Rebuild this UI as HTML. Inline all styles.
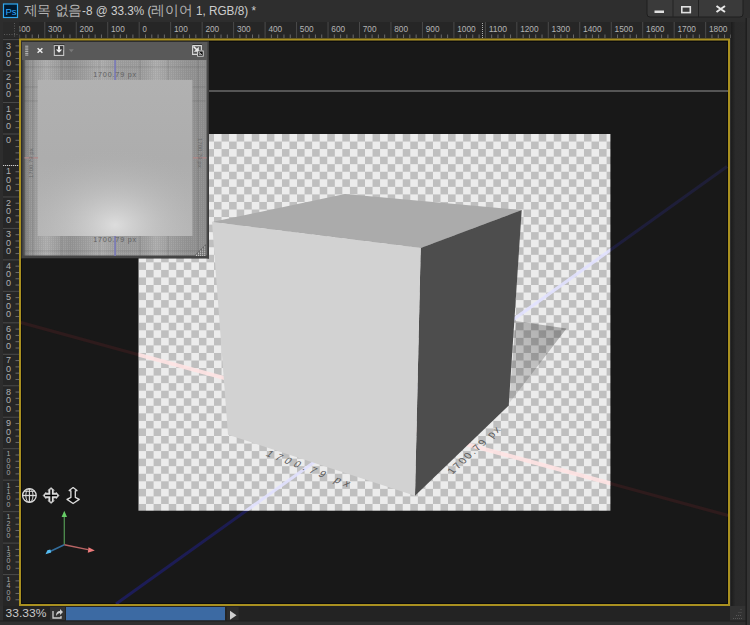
<!DOCTYPE html><html><head><meta charset="utf-8"><style>
html,body{margin:0;padding:0;background:#2d2d2d;width:750px;height:625px;overflow:hidden}
svg{display:block}
text{font-family:"Liberation Sans",sans-serif}
</style></head><body>
<svg width="750" height="625" viewBox="0 0 750 625">
<defs>
<pattern id="chk" x="138.5" y="134" width="15.1" height="15.1" patternUnits="userSpaceOnUse">
<rect width="15.1" height="15.1" fill="#ececec"/>
<rect x="7.55" width="7.55" height="7.55" fill="#bfbfbf"/>
<rect y="7.55" width="7.55" height="7.55" fill="#bfbfbf"/>
</pattern>
<clipPath id="canvasclip"><rect x="138.5" y="134" width="471.9" height="376.7"/></clipPath>
<clipPath id="docclip"><path clip-rule="evenodd" d="M21 41 H728 V604 H21 Z M138.5 134 H610.4 V510.7 H138.5 Z"/></clipPath>
<linearGradient id="shadowg" x1="0.8" y1="0" x2="0.2" y2="1">
<stop offset="0" stop-color="#000" stop-opacity="0.27"/>
<stop offset="1" stop-color="#000" stop-opacity="0.1"/>
</linearGradient>
<pattern id="grid" x="0" y="0" width="2" height="2" patternUnits="userSpaceOnUse">
<rect width="2" height="2" fill="#aaaaaa"/><rect width="0.8" height="2" fill="#9a9a9a"/><rect width="2" height="0.8" fill="#9e9e9e"/>
</pattern>
<linearGradient id="bandg" x1="0" y1="0" x2="1" y2="0">
<stop offset="0" stop-color="#000" stop-opacity="0.5"/>
<stop offset="0.12" stop-color="#fff" stop-opacity="0.4"/>
<stop offset="0.25" stop-color="#000" stop-opacity="0.3"/>
<stop offset="0.42" stop-color="#fff" stop-opacity="0.4"/>
<stop offset="0.6" stop-color="#000" stop-opacity="0.1"/>
<stop offset="0.72" stop-color="#fff" stop-opacity="0.4"/>
<stop offset="0.9" stop-color="#000" stop-opacity="0.3"/>
<stop offset="1" stop-color="#000" stop-opacity="0.4"/>
</linearGradient>
<linearGradient id="planeg" x1="0" y1="0" x2="0" y2="1">
<stop offset="0" stop-color="#b1b1b1"/>
<stop offset="0.5" stop-color="#adadad"/>
<stop offset="1" stop-color="#b4b4b4"/>
</linearGradient>
<radialGradient id="planeglow" cx="0.5" cy="0.93" r="0.62" fx="0.5" fy="0.93" gradientTransform="translate(0.5,0.93) scale(1.1,0.8) translate(-0.5,-0.93)">
<stop offset="0" stop-color="#e4e4e4" stop-opacity="0.85"/>
<stop offset="0.45" stop-color="#cfcfcf" stop-opacity="0.4"/>
<stop offset="1" stop-color="#b0b0b0" stop-opacity="0"/>
</radialGradient>
<linearGradient id="rstrip" x1="0" y1="0" x2="1" y2="0">
<stop offset="0" stop-color="#1c1c1c"/><stop offset="0.3" stop-color="#2a2a2a"/><stop offset="1" stop-color="#2b2b2b"/>
</linearGradient>
<filter id="soft" x="-5%" y="-5%" width="110%" height="110%"><feGaussianBlur stdDeviation="0.5"/></filter>
<linearGradient id="pedge" x1="0" y1="0" x2="1" y2="0"><stop offset="0" stop-color="#8a8a8a"/><stop offset="1" stop-color="#4a4a4a"/></linearGradient>
<linearGradient id="blueg" gradientUnits="userSpaceOnUse" x1="116" y1="604" x2="727" y2="166.5"><stop offset="0" stop-color="#1c1c58"/><stop offset="1" stop-color="#1e1e36"/></linearGradient>
<pattern id="dots" x="0" y="0" width="2" height="2" patternUnits="userSpaceOnUse"><rect width="2" height="2" fill="#6a6a6a"/><rect width="1" height="1" fill="#c8c8c8"/></pattern>
<linearGradient id="ledge" x1="0" y1="0" x2="1" y2="0"><stop offset="0" stop-color="#3a3a3a"/><stop offset="1" stop-color="#6a6a6a"/></linearGradient>
</defs>

<rect x="0" y="0" width="750" height="625" fill="#2d2d2d"/>
<rect x="0" y="0" width="750" height="20" fill="#2e2e2e"/>
<rect x="3.5" y="4" width="14" height="13.5" fill="#001a30" stroke="#2fa8f0" stroke-width="1.2"/>
<text x="5.4" y="14.5" font-size="9.5" fill="#31a8ff">Ps</text>
<text x="23.5" y="15" font-size="12" fill="#cdcdcd" textLength="232.5" lengthAdjust="spacingAndGlyphs"><tspan font-size="13.6" fill="#b4b4b4">제목 없음</tspan>-8 @ 33.3% (<tspan font-size="13.6" fill="#b4b4b4">레이어</tspan> 1, RGB/8) *</text>
<rect x="647" y="-3" width="96" height="20" rx="3" fill="#3a3a3a" stroke="#1e1e1e" stroke-width="1"/>
<line x1="673" y1="0" x2="673" y2="17" stroke="#222" stroke-width="1"/>
<line x1="698.5" y1="0" x2="698.5" y2="17" stroke="#222" stroke-width="1"/>
<rect x="654.5" y="10.5" width="9.5" height="2.5" fill="#e0e0e0"/>
<rect x="681.8" y="6.8" width="8.5" height="5.8" fill="none" stroke="#e0e0e0" stroke-width="1.6"/>
<path d="M716.5 6 L725 12 M725 6 L716.5 12" stroke="#e8e8e8" stroke-width="2"/>
<rect x="3" y="22" width="728" height="16.5" fill="#262626"/>
<rect x="3" y="22" width="16" height="16.5" fill="#2a2a2a"/>
<path d="M14.5 23 V37 M4 34.5 H18" stroke="#5a5a5a" stroke-width="1" stroke-dasharray="1,1.5"/>
<g clip-path="url(#rtop)"><line x1="-5.56" y1="34.5" x2="-5.56" y2="38" stroke="#6a6a6a" stroke-width="1"/><line x1="0.73" y1="34.5" x2="0.73" y2="38" stroke="#6a6a6a" stroke-width="1"/><line x1="7.03" y1="34.5" x2="7.03" y2="38" stroke="#6a6a6a" stroke-width="1"/><line x1="13.32" y1="22" x2="13.32" y2="38" stroke="#4a4a4a" stroke-width="1"/><line x1="19.61" y1="34.5" x2="19.61" y2="38" stroke="#6a6a6a" stroke-width="1"/><line x1="25.91" y1="34.5" x2="25.91" y2="38" stroke="#6a6a6a" stroke-width="1"/><line x1="32.20" y1="34.5" x2="32.20" y2="38" stroke="#6a6a6a" stroke-width="1"/><line x1="38.50" y1="34.5" x2="38.50" y2="38" stroke="#6a6a6a" stroke-width="1"/><line x1="44.79" y1="22" x2="44.79" y2="38" stroke="#4a4a4a" stroke-width="1"/><line x1="51.08" y1="34.5" x2="51.08" y2="38" stroke="#6a6a6a" stroke-width="1"/><line x1="57.38" y1="34.5" x2="57.38" y2="38" stroke="#6a6a6a" stroke-width="1"/><line x1="63.67" y1="34.5" x2="63.67" y2="38" stroke="#6a6a6a" stroke-width="1"/><line x1="69.97" y1="34.5" x2="69.97" y2="38" stroke="#6a6a6a" stroke-width="1"/><line x1="76.26" y1="22" x2="76.26" y2="38" stroke="#4a4a4a" stroke-width="1"/><line x1="82.55" y1="34.5" x2="82.55" y2="38" stroke="#6a6a6a" stroke-width="1"/><line x1="88.85" y1="34.5" x2="88.85" y2="38" stroke="#6a6a6a" stroke-width="1"/><line x1="95.14" y1="34.5" x2="95.14" y2="38" stroke="#6a6a6a" stroke-width="1"/><line x1="101.44" y1="34.5" x2="101.44" y2="38" stroke="#6a6a6a" stroke-width="1"/><line x1="107.73" y1="22" x2="107.73" y2="38" stroke="#4a4a4a" stroke-width="1"/><line x1="114.02" y1="34.5" x2="114.02" y2="38" stroke="#6a6a6a" stroke-width="1"/><line x1="120.32" y1="34.5" x2="120.32" y2="38" stroke="#6a6a6a" stroke-width="1"/><line x1="126.61" y1="34.5" x2="126.61" y2="38" stroke="#6a6a6a" stroke-width="1"/><line x1="132.91" y1="34.5" x2="132.91" y2="38" stroke="#6a6a6a" stroke-width="1"/><line x1="139.20" y1="22" x2="139.20" y2="38" stroke="#4a4a4a" stroke-width="1"/><line x1="145.49" y1="34.5" x2="145.49" y2="38" stroke="#6a6a6a" stroke-width="1"/><line x1="151.79" y1="34.5" x2="151.79" y2="38" stroke="#6a6a6a" stroke-width="1"/><line x1="158.08" y1="34.5" x2="158.08" y2="38" stroke="#6a6a6a" stroke-width="1"/><line x1="164.38" y1="34.5" x2="164.38" y2="38" stroke="#6a6a6a" stroke-width="1"/><line x1="170.67" y1="22" x2="170.67" y2="38" stroke="#4a4a4a" stroke-width="1"/><line x1="176.96" y1="34.5" x2="176.96" y2="38" stroke="#6a6a6a" stroke-width="1"/><line x1="183.26" y1="34.5" x2="183.26" y2="38" stroke="#6a6a6a" stroke-width="1"/><line x1="189.55" y1="34.5" x2="189.55" y2="38" stroke="#6a6a6a" stroke-width="1"/><line x1="195.85" y1="34.5" x2="195.85" y2="38" stroke="#6a6a6a" stroke-width="1"/><line x1="202.14" y1="22" x2="202.14" y2="38" stroke="#4a4a4a" stroke-width="1"/><line x1="208.43" y1="34.5" x2="208.43" y2="38" stroke="#6a6a6a" stroke-width="1"/><line x1="214.73" y1="34.5" x2="214.73" y2="38" stroke="#6a6a6a" stroke-width="1"/><line x1="221.02" y1="34.5" x2="221.02" y2="38" stroke="#6a6a6a" stroke-width="1"/><line x1="227.32" y1="34.5" x2="227.32" y2="38" stroke="#6a6a6a" stroke-width="1"/><line x1="233.61" y1="22" x2="233.61" y2="38" stroke="#4a4a4a" stroke-width="1"/><line x1="239.90" y1="34.5" x2="239.90" y2="38" stroke="#6a6a6a" stroke-width="1"/><line x1="246.20" y1="34.5" x2="246.20" y2="38" stroke="#6a6a6a" stroke-width="1"/><line x1="252.49" y1="34.5" x2="252.49" y2="38" stroke="#6a6a6a" stroke-width="1"/><line x1="258.79" y1="34.5" x2="258.79" y2="38" stroke="#6a6a6a" stroke-width="1"/><line x1="265.08" y1="22" x2="265.08" y2="38" stroke="#4a4a4a" stroke-width="1"/><line x1="271.37" y1="34.5" x2="271.37" y2="38" stroke="#6a6a6a" stroke-width="1"/><line x1="277.67" y1="34.5" x2="277.67" y2="38" stroke="#6a6a6a" stroke-width="1"/><line x1="283.96" y1="34.5" x2="283.96" y2="38" stroke="#6a6a6a" stroke-width="1"/><line x1="290.26" y1="34.5" x2="290.26" y2="38" stroke="#6a6a6a" stroke-width="1"/><line x1="296.55" y1="22" x2="296.55" y2="38" stroke="#4a4a4a" stroke-width="1"/><line x1="302.84" y1="34.5" x2="302.84" y2="38" stroke="#6a6a6a" stroke-width="1"/><line x1="309.14" y1="34.5" x2="309.14" y2="38" stroke="#6a6a6a" stroke-width="1"/><line x1="315.43" y1="34.5" x2="315.43" y2="38" stroke="#6a6a6a" stroke-width="1"/><line x1="321.73" y1="34.5" x2="321.73" y2="38" stroke="#6a6a6a" stroke-width="1"/><line x1="328.02" y1="22" x2="328.02" y2="38" stroke="#4a4a4a" stroke-width="1"/><line x1="334.31" y1="34.5" x2="334.31" y2="38" stroke="#6a6a6a" stroke-width="1"/><line x1="340.61" y1="34.5" x2="340.61" y2="38" stroke="#6a6a6a" stroke-width="1"/><line x1="346.90" y1="34.5" x2="346.90" y2="38" stroke="#6a6a6a" stroke-width="1"/><line x1="353.20" y1="34.5" x2="353.20" y2="38" stroke="#6a6a6a" stroke-width="1"/><line x1="359.49" y1="22" x2="359.49" y2="38" stroke="#4a4a4a" stroke-width="1"/><line x1="365.78" y1="34.5" x2="365.78" y2="38" stroke="#6a6a6a" stroke-width="1"/><line x1="372.08" y1="34.5" x2="372.08" y2="38" stroke="#6a6a6a" stroke-width="1"/><line x1="378.37" y1="34.5" x2="378.37" y2="38" stroke="#6a6a6a" stroke-width="1"/><line x1="384.67" y1="34.5" x2="384.67" y2="38" stroke="#6a6a6a" stroke-width="1"/><line x1="390.96" y1="22" x2="390.96" y2="38" stroke="#4a4a4a" stroke-width="1"/><line x1="397.25" y1="34.5" x2="397.25" y2="38" stroke="#6a6a6a" stroke-width="1"/><line x1="403.55" y1="34.5" x2="403.55" y2="38" stroke="#6a6a6a" stroke-width="1"/><line x1="409.84" y1="34.5" x2="409.84" y2="38" stroke="#6a6a6a" stroke-width="1"/><line x1="416.14" y1="34.5" x2="416.14" y2="38" stroke="#6a6a6a" stroke-width="1"/><line x1="422.43" y1="22" x2="422.43" y2="38" stroke="#4a4a4a" stroke-width="1"/><line x1="428.72" y1="34.5" x2="428.72" y2="38" stroke="#6a6a6a" stroke-width="1"/><line x1="435.02" y1="34.5" x2="435.02" y2="38" stroke="#6a6a6a" stroke-width="1"/><line x1="441.31" y1="34.5" x2="441.31" y2="38" stroke="#6a6a6a" stroke-width="1"/><line x1="447.61" y1="34.5" x2="447.61" y2="38" stroke="#6a6a6a" stroke-width="1"/><line x1="453.90" y1="22" x2="453.90" y2="38" stroke="#4a4a4a" stroke-width="1"/><line x1="460.19" y1="34.5" x2="460.19" y2="38" stroke="#6a6a6a" stroke-width="1"/><line x1="466.49" y1="34.5" x2="466.49" y2="38" stroke="#6a6a6a" stroke-width="1"/><line x1="472.78" y1="34.5" x2="472.78" y2="38" stroke="#6a6a6a" stroke-width="1"/><line x1="479.08" y1="34.5" x2="479.08" y2="38" stroke="#6a6a6a" stroke-width="1"/><line x1="485.37" y1="22" x2="485.37" y2="38" stroke="#4a4a4a" stroke-width="1"/><line x1="491.66" y1="34.5" x2="491.66" y2="38" stroke="#6a6a6a" stroke-width="1"/><line x1="497.96" y1="34.5" x2="497.96" y2="38" stroke="#6a6a6a" stroke-width="1"/><line x1="504.25" y1="34.5" x2="504.25" y2="38" stroke="#6a6a6a" stroke-width="1"/><line x1="510.55" y1="34.5" x2="510.55" y2="38" stroke="#6a6a6a" stroke-width="1"/><line x1="516.84" y1="22" x2="516.84" y2="38" stroke="#4a4a4a" stroke-width="1"/><line x1="523.13" y1="34.5" x2="523.13" y2="38" stroke="#6a6a6a" stroke-width="1"/><line x1="529.43" y1="34.5" x2="529.43" y2="38" stroke="#6a6a6a" stroke-width="1"/><line x1="535.72" y1="34.5" x2="535.72" y2="38" stroke="#6a6a6a" stroke-width="1"/><line x1="542.02" y1="34.5" x2="542.02" y2="38" stroke="#6a6a6a" stroke-width="1"/><line x1="548.31" y1="22" x2="548.31" y2="38" stroke="#4a4a4a" stroke-width="1"/><line x1="554.60" y1="34.5" x2="554.60" y2="38" stroke="#6a6a6a" stroke-width="1"/><line x1="560.90" y1="34.5" x2="560.90" y2="38" stroke="#6a6a6a" stroke-width="1"/><line x1="567.19" y1="34.5" x2="567.19" y2="38" stroke="#6a6a6a" stroke-width="1"/><line x1="573.49" y1="34.5" x2="573.49" y2="38" stroke="#6a6a6a" stroke-width="1"/><line x1="579.78" y1="22" x2="579.78" y2="38" stroke="#4a4a4a" stroke-width="1"/><line x1="586.07" y1="34.5" x2="586.07" y2="38" stroke="#6a6a6a" stroke-width="1"/><line x1="592.37" y1="34.5" x2="592.37" y2="38" stroke="#6a6a6a" stroke-width="1"/><line x1="598.66" y1="34.5" x2="598.66" y2="38" stroke="#6a6a6a" stroke-width="1"/><line x1="604.96" y1="34.5" x2="604.96" y2="38" stroke="#6a6a6a" stroke-width="1"/><line x1="611.25" y1="22" x2="611.25" y2="38" stroke="#4a4a4a" stroke-width="1"/><line x1="617.54" y1="34.5" x2="617.54" y2="38" stroke="#6a6a6a" stroke-width="1"/><line x1="623.84" y1="34.5" x2="623.84" y2="38" stroke="#6a6a6a" stroke-width="1"/><line x1="630.13" y1="34.5" x2="630.13" y2="38" stroke="#6a6a6a" stroke-width="1"/><line x1="636.43" y1="34.5" x2="636.43" y2="38" stroke="#6a6a6a" stroke-width="1"/><line x1="642.72" y1="22" x2="642.72" y2="38" stroke="#4a4a4a" stroke-width="1"/><line x1="649.01" y1="34.5" x2="649.01" y2="38" stroke="#6a6a6a" stroke-width="1"/><line x1="655.31" y1="34.5" x2="655.31" y2="38" stroke="#6a6a6a" stroke-width="1"/><line x1="661.60" y1="34.5" x2="661.60" y2="38" stroke="#6a6a6a" stroke-width="1"/><line x1="667.90" y1="34.5" x2="667.90" y2="38" stroke="#6a6a6a" stroke-width="1"/><line x1="674.19" y1="22" x2="674.19" y2="38" stroke="#4a4a4a" stroke-width="1"/><line x1="680.48" y1="34.5" x2="680.48" y2="38" stroke="#6a6a6a" stroke-width="1"/><line x1="686.78" y1="34.5" x2="686.78" y2="38" stroke="#6a6a6a" stroke-width="1"/><line x1="693.07" y1="34.5" x2="693.07" y2="38" stroke="#6a6a6a" stroke-width="1"/><line x1="699.37" y1="34.5" x2="699.37" y2="38" stroke="#6a6a6a" stroke-width="1"/><line x1="705.66" y1="22" x2="705.66" y2="38" stroke="#4a4a4a" stroke-width="1"/><line x1="711.95" y1="34.5" x2="711.95" y2="38" stroke="#6a6a6a" stroke-width="1"/><line x1="718.25" y1="34.5" x2="718.25" y2="38" stroke="#6a6a6a" stroke-width="1"/><line x1="724.54" y1="34.5" x2="724.54" y2="38" stroke="#6a6a6a" stroke-width="1"/><line x1="730.84" y1="34.5" x2="730.84" y2="38" stroke="#6a6a6a" stroke-width="1"/><text x="16.62" y="31.9" font-size="9.2" fill="#b4b4b4" textLength="13.76" lengthAdjust="spacingAndGlyphs">400</text><text x="48.09" y="31.9" font-size="9.2" fill="#b4b4b4" textLength="13.76" lengthAdjust="spacingAndGlyphs">300</text><text x="79.56" y="31.9" font-size="9.2" fill="#b4b4b4" textLength="13.76" lengthAdjust="spacingAndGlyphs">200</text><text x="111.03" y="31.9" font-size="9.2" fill="#b4b4b4" textLength="13.76" lengthAdjust="spacingAndGlyphs">100</text><text x="142.50" y="31.9" font-size="9.2" fill="#b4b4b4" textLength="4.32" lengthAdjust="spacingAndGlyphs">0</text><text x="173.97" y="31.9" font-size="9.2" fill="#b4b4b4" textLength="13.76" lengthAdjust="spacingAndGlyphs">100</text><text x="205.44" y="31.9" font-size="9.2" fill="#b4b4b4" textLength="13.76" lengthAdjust="spacingAndGlyphs">200</text><text x="236.91" y="31.9" font-size="9.2" fill="#b4b4b4" textLength="13.76" lengthAdjust="spacingAndGlyphs">300</text><text x="268.38" y="31.9" font-size="9.2" fill="#b4b4b4" textLength="13.76" lengthAdjust="spacingAndGlyphs">400</text><text x="299.85" y="31.9" font-size="9.2" fill="#b4b4b4" textLength="13.76" lengthAdjust="spacingAndGlyphs">500</text><text x="331.32" y="31.9" font-size="9.2" fill="#b4b4b4" textLength="13.76" lengthAdjust="spacingAndGlyphs">600</text><text x="362.79" y="31.9" font-size="9.2" fill="#b4b4b4" textLength="13.76" lengthAdjust="spacingAndGlyphs">700</text><text x="394.26" y="31.9" font-size="9.2" fill="#b4b4b4" textLength="13.76" lengthAdjust="spacingAndGlyphs">800</text><text x="425.73" y="31.9" font-size="9.2" fill="#b4b4b4" textLength="13.76" lengthAdjust="spacingAndGlyphs">900</text><text x="457.20" y="31.9" font-size="9.2" fill="#b4b4b4" textLength="18.48" lengthAdjust="spacingAndGlyphs">1000</text><text x="488.67" y="31.9" font-size="9.2" fill="#b4b4b4" textLength="18.48" lengthAdjust="spacingAndGlyphs">1100</text><text x="520.14" y="31.9" font-size="9.2" fill="#b4b4b4" textLength="18.48" lengthAdjust="spacingAndGlyphs">1200</text><text x="551.61" y="31.9" font-size="9.2" fill="#b4b4b4" textLength="18.48" lengthAdjust="spacingAndGlyphs">1300</text><text x="583.08" y="31.9" font-size="9.2" fill="#b4b4b4" textLength="18.48" lengthAdjust="spacingAndGlyphs">1400</text><text x="614.55" y="31.9" font-size="9.2" fill="#b4b4b4" textLength="18.48" lengthAdjust="spacingAndGlyphs">1500</text><text x="646.02" y="31.9" font-size="9.2" fill="#b4b4b4" textLength="18.48" lengthAdjust="spacingAndGlyphs">1600</text><text x="677.49" y="31.9" font-size="9.2" fill="#b4b4b4" textLength="18.48" lengthAdjust="spacingAndGlyphs">1700</text><text x="708.96" y="31.9" font-size="9.2" fill="#b4b4b4" textLength="18.48" lengthAdjust="spacingAndGlyphs">1800</text></g>
<clipPath id="rtop"><rect x="19.5" y="22" width="712" height="16.5"/></clipPath>
<line x1="482.5" y1="23" x2="482.5" y2="38" stroke="#bdbdbd" stroke-width="0.9" stroke-dasharray="1,1"/>
<rect x="3" y="38.5" width="16" height="568" fill="#262626"/>
<clipPath id="rleft"><rect x="3" y="38.5" width="16" height="566"/></clipPath>
<g clip-path="url(#rleft)"><line x1="3" y1="39.59" x2="19" y2="39.59" stroke="#4a4a4a" stroke-width="1"/><line x1="15.5" y1="45.88" x2="19" y2="45.88" stroke="#6a6a6a" stroke-width="1"/><line x1="15.5" y1="52.18" x2="19" y2="52.18" stroke="#6a6a6a" stroke-width="1"/><line x1="15.5" y1="58.47" x2="19" y2="58.47" stroke="#6a6a6a" stroke-width="1"/><line x1="15.5" y1="64.77" x2="19" y2="64.77" stroke="#6a6a6a" stroke-width="1"/><line x1="3" y1="71.06" x2="19" y2="71.06" stroke="#4a4a4a" stroke-width="1"/><line x1="15.5" y1="77.35" x2="19" y2="77.35" stroke="#6a6a6a" stroke-width="1"/><line x1="15.5" y1="83.65" x2="19" y2="83.65" stroke="#6a6a6a" stroke-width="1"/><line x1="15.5" y1="89.94" x2="19" y2="89.94" stroke="#6a6a6a" stroke-width="1"/><line x1="15.5" y1="96.24" x2="19" y2="96.24" stroke="#6a6a6a" stroke-width="1"/><line x1="3" y1="102.53" x2="19" y2="102.53" stroke="#4a4a4a" stroke-width="1"/><line x1="15.5" y1="108.82" x2="19" y2="108.82" stroke="#6a6a6a" stroke-width="1"/><line x1="15.5" y1="115.12" x2="19" y2="115.12" stroke="#6a6a6a" stroke-width="1"/><line x1="15.5" y1="121.41" x2="19" y2="121.41" stroke="#6a6a6a" stroke-width="1"/><line x1="15.5" y1="127.71" x2="19" y2="127.71" stroke="#6a6a6a" stroke-width="1"/><line x1="3" y1="134.00" x2="19" y2="134.00" stroke="#4a4a4a" stroke-width="1"/><line x1="15.5" y1="140.29" x2="19" y2="140.29" stroke="#6a6a6a" stroke-width="1"/><line x1="15.5" y1="146.59" x2="19" y2="146.59" stroke="#6a6a6a" stroke-width="1"/><line x1="15.5" y1="152.88" x2="19" y2="152.88" stroke="#6a6a6a" stroke-width="1"/><line x1="15.5" y1="159.18" x2="19" y2="159.18" stroke="#6a6a6a" stroke-width="1"/><line x1="3" y1="165.47" x2="19" y2="165.47" stroke="#4a4a4a" stroke-width="1"/><line x1="15.5" y1="171.76" x2="19" y2="171.76" stroke="#6a6a6a" stroke-width="1"/><line x1="15.5" y1="178.06" x2="19" y2="178.06" stroke="#6a6a6a" stroke-width="1"/><line x1="15.5" y1="184.35" x2="19" y2="184.35" stroke="#6a6a6a" stroke-width="1"/><line x1="15.5" y1="190.65" x2="19" y2="190.65" stroke="#6a6a6a" stroke-width="1"/><line x1="3" y1="196.94" x2="19" y2="196.94" stroke="#4a4a4a" stroke-width="1"/><line x1="15.5" y1="203.23" x2="19" y2="203.23" stroke="#6a6a6a" stroke-width="1"/><line x1="15.5" y1="209.53" x2="19" y2="209.53" stroke="#6a6a6a" stroke-width="1"/><line x1="15.5" y1="215.82" x2="19" y2="215.82" stroke="#6a6a6a" stroke-width="1"/><line x1="15.5" y1="222.12" x2="19" y2="222.12" stroke="#6a6a6a" stroke-width="1"/><line x1="3" y1="228.41" x2="19" y2="228.41" stroke="#4a4a4a" stroke-width="1"/><line x1="15.5" y1="234.70" x2="19" y2="234.70" stroke="#6a6a6a" stroke-width="1"/><line x1="15.5" y1="241.00" x2="19" y2="241.00" stroke="#6a6a6a" stroke-width="1"/><line x1="15.5" y1="247.29" x2="19" y2="247.29" stroke="#6a6a6a" stroke-width="1"/><line x1="15.5" y1="253.59" x2="19" y2="253.59" stroke="#6a6a6a" stroke-width="1"/><line x1="3" y1="259.88" x2="19" y2="259.88" stroke="#4a4a4a" stroke-width="1"/><line x1="15.5" y1="266.17" x2="19" y2="266.17" stroke="#6a6a6a" stroke-width="1"/><line x1="15.5" y1="272.47" x2="19" y2="272.47" stroke="#6a6a6a" stroke-width="1"/><line x1="15.5" y1="278.76" x2="19" y2="278.76" stroke="#6a6a6a" stroke-width="1"/><line x1="15.5" y1="285.06" x2="19" y2="285.06" stroke="#6a6a6a" stroke-width="1"/><line x1="3" y1="291.35" x2="19" y2="291.35" stroke="#4a4a4a" stroke-width="1"/><line x1="15.5" y1="297.64" x2="19" y2="297.64" stroke="#6a6a6a" stroke-width="1"/><line x1="15.5" y1="303.94" x2="19" y2="303.94" stroke="#6a6a6a" stroke-width="1"/><line x1="15.5" y1="310.23" x2="19" y2="310.23" stroke="#6a6a6a" stroke-width="1"/><line x1="15.5" y1="316.53" x2="19" y2="316.53" stroke="#6a6a6a" stroke-width="1"/><line x1="3" y1="322.82" x2="19" y2="322.82" stroke="#4a4a4a" stroke-width="1"/><line x1="15.5" y1="329.11" x2="19" y2="329.11" stroke="#6a6a6a" stroke-width="1"/><line x1="15.5" y1="335.41" x2="19" y2="335.41" stroke="#6a6a6a" stroke-width="1"/><line x1="15.5" y1="341.70" x2="19" y2="341.70" stroke="#6a6a6a" stroke-width="1"/><line x1="15.5" y1="348.00" x2="19" y2="348.00" stroke="#6a6a6a" stroke-width="1"/><line x1="3" y1="354.29" x2="19" y2="354.29" stroke="#4a4a4a" stroke-width="1"/><line x1="15.5" y1="360.58" x2="19" y2="360.58" stroke="#6a6a6a" stroke-width="1"/><line x1="15.5" y1="366.88" x2="19" y2="366.88" stroke="#6a6a6a" stroke-width="1"/><line x1="15.5" y1="373.17" x2="19" y2="373.17" stroke="#6a6a6a" stroke-width="1"/><line x1="15.5" y1="379.47" x2="19" y2="379.47" stroke="#6a6a6a" stroke-width="1"/><line x1="3" y1="385.76" x2="19" y2="385.76" stroke="#4a4a4a" stroke-width="1"/><line x1="15.5" y1="392.05" x2="19" y2="392.05" stroke="#6a6a6a" stroke-width="1"/><line x1="15.5" y1="398.35" x2="19" y2="398.35" stroke="#6a6a6a" stroke-width="1"/><line x1="15.5" y1="404.64" x2="19" y2="404.64" stroke="#6a6a6a" stroke-width="1"/><line x1="15.5" y1="410.94" x2="19" y2="410.94" stroke="#6a6a6a" stroke-width="1"/><line x1="3" y1="417.23" x2="19" y2="417.23" stroke="#4a4a4a" stroke-width="1"/><line x1="15.5" y1="423.52" x2="19" y2="423.52" stroke="#6a6a6a" stroke-width="1"/><line x1="15.5" y1="429.82" x2="19" y2="429.82" stroke="#6a6a6a" stroke-width="1"/><line x1="15.5" y1="436.11" x2="19" y2="436.11" stroke="#6a6a6a" stroke-width="1"/><line x1="15.5" y1="442.41" x2="19" y2="442.41" stroke="#6a6a6a" stroke-width="1"/><line x1="3" y1="448.70" x2="19" y2="448.70" stroke="#4a4a4a" stroke-width="1"/><line x1="15.5" y1="454.99" x2="19" y2="454.99" stroke="#6a6a6a" stroke-width="1"/><line x1="15.5" y1="461.29" x2="19" y2="461.29" stroke="#6a6a6a" stroke-width="1"/><line x1="15.5" y1="467.58" x2="19" y2="467.58" stroke="#6a6a6a" stroke-width="1"/><line x1="15.5" y1="473.88" x2="19" y2="473.88" stroke="#6a6a6a" stroke-width="1"/><line x1="3" y1="480.17" x2="19" y2="480.17" stroke="#4a4a4a" stroke-width="1"/><line x1="15.5" y1="486.46" x2="19" y2="486.46" stroke="#6a6a6a" stroke-width="1"/><line x1="15.5" y1="492.76" x2="19" y2="492.76" stroke="#6a6a6a" stroke-width="1"/><line x1="15.5" y1="499.05" x2="19" y2="499.05" stroke="#6a6a6a" stroke-width="1"/><line x1="15.5" y1="505.35" x2="19" y2="505.35" stroke="#6a6a6a" stroke-width="1"/><line x1="3" y1="511.64" x2="19" y2="511.64" stroke="#4a4a4a" stroke-width="1"/><line x1="15.5" y1="517.93" x2="19" y2="517.93" stroke="#6a6a6a" stroke-width="1"/><line x1="15.5" y1="524.23" x2="19" y2="524.23" stroke="#6a6a6a" stroke-width="1"/><line x1="15.5" y1="530.52" x2="19" y2="530.52" stroke="#6a6a6a" stroke-width="1"/><line x1="15.5" y1="536.82" x2="19" y2="536.82" stroke="#6a6a6a" stroke-width="1"/><line x1="3" y1="543.11" x2="19" y2="543.11" stroke="#4a4a4a" stroke-width="1"/><line x1="15.5" y1="549.40" x2="19" y2="549.40" stroke="#6a6a6a" stroke-width="1"/><line x1="15.5" y1="555.70" x2="19" y2="555.70" stroke="#6a6a6a" stroke-width="1"/><line x1="15.5" y1="561.99" x2="19" y2="561.99" stroke="#6a6a6a" stroke-width="1"/><line x1="15.5" y1="568.29" x2="19" y2="568.29" stroke="#6a6a6a" stroke-width="1"/><line x1="3" y1="574.58" x2="19" y2="574.58" stroke="#4a4a4a" stroke-width="1"/><line x1="15.5" y1="580.87" x2="19" y2="580.87" stroke="#6a6a6a" stroke-width="1"/><line x1="15.5" y1="587.17" x2="19" y2="587.17" stroke="#6a6a6a" stroke-width="1"/><line x1="15.5" y1="593.46" x2="19" y2="593.46" stroke="#6a6a6a" stroke-width="1"/><line x1="15.5" y1="599.76" x2="19" y2="599.76" stroke="#6a6a6a" stroke-width="1"/><text x="6" y="48.59" font-size="9" fill="#b0b0b0">3</text><text x="6" y="57.09" font-size="9" fill="#b0b0b0">0</text><text x="6" y="65.59" font-size="9" fill="#b0b0b0">0</text><text x="6" y="80.06" font-size="9" fill="#b0b0b0">2</text><text x="6" y="88.56" font-size="9" fill="#b0b0b0">0</text><text x="6" y="97.06" font-size="9" fill="#b0b0b0">0</text><text x="6" y="111.53" font-size="9" fill="#b0b0b0">1</text><text x="6" y="120.03" font-size="9" fill="#b0b0b0">0</text><text x="6" y="128.53" font-size="9" fill="#b0b0b0">0</text><text x="6" y="143.00" font-size="9" fill="#b0b0b0">0</text><text x="6" y="174.47" font-size="9" fill="#b0b0b0">1</text><text x="6" y="182.97" font-size="9" fill="#b0b0b0">0</text><text x="6" y="191.47" font-size="9" fill="#b0b0b0">0</text><text x="6" y="205.94" font-size="9" fill="#b0b0b0">2</text><text x="6" y="214.44" font-size="9" fill="#b0b0b0">0</text><text x="6" y="222.94" font-size="9" fill="#b0b0b0">0</text><text x="6" y="237.41" font-size="9" fill="#b0b0b0">3</text><text x="6" y="245.91" font-size="9" fill="#b0b0b0">0</text><text x="6" y="254.41" font-size="9" fill="#b0b0b0">0</text><text x="6" y="268.88" font-size="9" fill="#b0b0b0">4</text><text x="6" y="277.38" font-size="9" fill="#b0b0b0">0</text><text x="6" y="285.88" font-size="9" fill="#b0b0b0">0</text><text x="6" y="300.35" font-size="9" fill="#b0b0b0">5</text><text x="6" y="308.85" font-size="9" fill="#b0b0b0">0</text><text x="6" y="317.35" font-size="9" fill="#b0b0b0">0</text><text x="6" y="331.82" font-size="9" fill="#b0b0b0">6</text><text x="6" y="340.32" font-size="9" fill="#b0b0b0">0</text><text x="6" y="348.82" font-size="9" fill="#b0b0b0">0</text><text x="6" y="363.29" font-size="9" fill="#b0b0b0">7</text><text x="6" y="371.79" font-size="9" fill="#b0b0b0">0</text><text x="6" y="380.29" font-size="9" fill="#b0b0b0">0</text><text x="6" y="394.76" font-size="9" fill="#b0b0b0">8</text><text x="6" y="403.26" font-size="9" fill="#b0b0b0">0</text><text x="6" y="411.76" font-size="9" fill="#b0b0b0">0</text><text x="6" y="426.23" font-size="9" fill="#b0b0b0">9</text><text x="6" y="434.73" font-size="9" fill="#b0b0b0">0</text><text x="6" y="443.23" font-size="9" fill="#b0b0b0">0</text><text x="6.5" y="456.20" font-size="7" fill="#a8a8a8">1</text><text x="6.5" y="462.60" font-size="7" fill="#a8a8a8">0</text><text x="6.5" y="469.00" font-size="7" fill="#a8a8a8">0</text><text x="6.5" y="475.40" font-size="7" fill="#a8a8a8">0</text><text x="6.5" y="487.67" font-size="7" fill="#a8a8a8">1</text><text x="6.5" y="494.07" font-size="7" fill="#a8a8a8">1</text><text x="6.5" y="500.47" font-size="7" fill="#a8a8a8">0</text><text x="6.5" y="506.87" font-size="7" fill="#a8a8a8">0</text><text x="6.5" y="519.14" font-size="7" fill="#a8a8a8">1</text><text x="6.5" y="525.54" font-size="7" fill="#a8a8a8">2</text><text x="6.5" y="531.94" font-size="7" fill="#a8a8a8">0</text><text x="6.5" y="538.34" font-size="7" fill="#a8a8a8">0</text><text x="6.5" y="550.61" font-size="7" fill="#a8a8a8">1</text><text x="6.5" y="557.01" font-size="7" fill="#a8a8a8">3</text><text x="6.5" y="563.41" font-size="7" fill="#a8a8a8">0</text><text x="6.5" y="569.81" font-size="7" fill="#a8a8a8">0</text><text x="6.5" y="582.08" font-size="7" fill="#a8a8a8">1</text><text x="6.5" y="588.48" font-size="7" fill="#a8a8a8">4</text><text x="6.5" y="594.88" font-size="7" fill="#a8a8a8">0</text><text x="6.5" y="601.28" font-size="7" fill="#a8a8a8">0</text></g>
<line x1="3" y1="165.5" x2="18.5" y2="165.5" stroke="#e0e0e0" stroke-width="0.9" stroke-dasharray="1,1"/>
<rect x="20" y="39.5" width="709" height="565.5" fill="#181818" stroke="#a99020" stroke-width="2"/>
<rect x="21.5" y="41.5" width="706" height="562" fill="none" stroke="#0c0c0c" stroke-width="1"/>
<rect x="209" y="90" width="519" height="2" fill="#555"/>
<rect x="138.5" y="134" width="471.9" height="376.7" fill="url(#chk)"/>
<g clip-path="url(#docclip)">
<line x1="21" y1="322.6" x2="728" y2="515.5" stroke="#2e1b1c" stroke-width="3.2"/>
<line x1="116" y1="604" x2="727" y2="166.5" stroke="url(#blueg)" stroke-width="3"/>
</g>
<g clip-path="url(#canvasclip)">
<line x1="21" y1="322.6" x2="728" y2="515.5" stroke="#ffe4e4" stroke-width="4" opacity="0.9" filter="url(#soft)"/>
<line x1="116" y1="604" x2="727" y2="166.5" stroke="#e2e2ff" stroke-width="3.2" opacity="0.9" filter="url(#soft)"/>
</g>
<text x="0" y="0" font-size="10" fill="#5a5a5a" textLength="88" lengthAdjust="spacing" transform="translate(265,455.5) rotate(21) skewX(-20)">1700.79 px</text>
<text x="0" y="0" font-size="10" fill="#5a5a5a" textLength="66" lengthAdjust="spacing" transform="translate(452.5,474.5) rotate(-42.5) skewX(15)">1700.79 px</text>
<polygon points="515.6,321 566.5,328.5 502,412.7 509,405" fill="url(#shadowg)"/>
<polygon points="212,222 345,194 521.7,210 420.7,248" fill="#ababab"/>
<polygon points="420.7,248 521.7,210 508.7,405.4 415,495.7" fill="#4d4d4d"/>
<polygon points="212,222 420.7,248 415,495.7 228,434.7" fill="#d2d2d2"/>
<rect x="21" y="41" width="188" height="217.5" fill="#2e2e2e"/>
<rect x="22" y="42" width="185.8" height="214" fill="#595959"/>
<rect x="24.5" y="60" width="182" height="196" fill="#a0a0a0"/>
<rect x="24.5" y="60" width="182" height="196" fill="url(#grid)"/>
<rect x="24.5" y="60" width="182" height="196" fill="url(#bandg)" opacity="0.3"/>
<rect x="22" y="60" width="3.5" height="196" fill="url(#ledge)"/>
<rect x="26.5" y="60" width="2" height="196" fill="#000" opacity="0.06"/>
<rect x="32" y="60" width="2" height="196" fill="#000" opacity="0.06"/>
<rect x="60.5" y="60" width="2" height="196" fill="#000" opacity="0.06"/>
<rect x="98.5" y="60" width="2" height="196" fill="#000" opacity="0.06"/>
<rect x="139" y="60" width="2" height="196" fill="#000" opacity="0.06"/>
<rect x="167" y="60" width="2" height="196" fill="#000" opacity="0.06"/>
<rect x="197" y="60" width="2" height="196" fill="#000" opacity="0.06"/>
<rect x="24.5" y="66" width="182" height="2" fill="#000" opacity="0.05"/>
<rect x="24.5" y="86" width="182" height="2" fill="#000" opacity="0.05"/>
<rect x="24.5" y="100" width="182" height="2" fill="#000" opacity="0.05"/>
<rect x="24.5" y="250" width="182" height="2" fill="#000" opacity="0.05"/>
<rect x="205.5" y="60" width="2.3" height="196" fill="url(#pedge)"/>
<rect x="207.6" y="42" width="1.4" height="216.5" fill="#3c3c3c"/>
<rect x="22" y="255.5" width="187" height="2.5" fill="#444"/>
<rect x="37.8" y="80" width="154.6" height="156" fill="url(#planeg)"/>
<rect x="37.8" y="80" width="154.6" height="156" fill="url(#planeglow)"/>
<rect x="114.3" y="60" width="1.6" height="20" fill="#7878b8"/>
<rect x="114.3" y="236" width="1.6" height="20" fill="#7878b8"/>
<rect x="24.5" y="157.2" width="13.5" height="1.3" fill="#b08888"/>
<rect x="193" y="157.2" width="13.5" height="1.3" fill="#b08888"/>
<text x="93.2" y="77.3" font-size="7.2" fill="#606060" textLength="43" lengthAdjust="spacing">1700.79 px</text>
<text x="93.2" y="241.8" font-size="7.2" fill="#606060" textLength="43" lengthAdjust="spacing">1700.79 px</text>
<text x="0" y="0" font-size="6" fill="#6a6a6a" transform="translate(33,178) rotate(-90)">1700.79 px</text>
<text x="0" y="0" font-size="6" fill="#6a6a6a" transform="translate(198,138) rotate(90)">1700.79 px</text>
<path d="M194.5 255.3 L206 244 V255.3 Z" fill="#6a6a6a"/>
<rect x="204.20" y="246.50" width="1.1" height="1.1" fill="#e0e0e0"/><rect x="204.20" y="248.55" width="1.1" height="1.1" fill="#e0e0e0"/><rect x="202.15" y="248.55" width="1.1" height="1.1" fill="#e0e0e0"/><rect x="204.20" y="250.60" width="1.1" height="1.1" fill="#e0e0e0"/><rect x="202.15" y="250.60" width="1.1" height="1.1" fill="#e0e0e0"/><rect x="200.10" y="250.60" width="1.1" height="1.1" fill="#e0e0e0"/><rect x="204.20" y="252.65" width="1.1" height="1.1" fill="#e0e0e0"/><rect x="202.15" y="252.65" width="1.1" height="1.1" fill="#e0e0e0"/><rect x="200.10" y="252.65" width="1.1" height="1.1" fill="#e0e0e0"/><rect x="198.05" y="252.65" width="1.1" height="1.1" fill="#e0e0e0"/><rect x="204.20" y="254.70" width="1.1" height="1.1" fill="#e0e0e0"/><rect x="202.15" y="254.70" width="1.1" height="1.1" fill="#e0e0e0"/><rect x="200.10" y="254.70" width="1.1" height="1.1" fill="#e0e0e0"/><rect x="198.05" y="254.70" width="1.1" height="1.1" fill="#e0e0e0"/><rect x="196.00" y="254.70" width="1.1" height="1.1" fill="#e0e0e0"/>
<path d="M25.2 46.2 H28.3 M25.2 48 H28.3 M25.2 49.8 H28.3 M25.2 51.6 H28.3 M25.2 53.4 H28.3 M25.2 55.1 H28.3" stroke="#d0d0d0" stroke-width="0.8"/>
<path d="M37.6 48.2 L42.4 52.8 M42.4 48.2 L37.6 52.8" stroke="#ececec" stroke-width="1.5"/>
<rect x="53.5" y="44.3" width="11" height="0.8" fill="#2a2a2a"/>
<rect x="54.3" y="45.7" width="9.4" height="9.7" fill="#4a4a4a" stroke="#d4d4d4" stroke-width="1"/>
<rect x="54.8" y="46.2" width="8.4" height="4" fill="#3a3a3a"/>
<path d="M55.8 49.5 H62.2 L59 52.7 Z" fill="#f0f0f0"/><rect x="58" y="46.2" width="2" height="3.5" fill="#f0f0f0"/>
<path d="M68.8 49.3 H73.8 L71.3 52.3 Z" fill="#7a7a7a"/>
<rect x="192.5" y="44.2" width="9.5" height="0.9" fill="#2a2a2a"/>
<path d="M192.6 45.6 H201.4 V50.3 M197.4 54.4 H192.6 V45.6" fill="none" stroke="#d8d8d8" stroke-width="1.1"/>
<path d="M193.5 46.5 L198 51" stroke="#eee" stroke-width="1.6"/><path d="M198.8 46.8 L198.8 51.8 L193.8 51.8 Z" fill="#e8e8e8"/>
<rect x="197.6" y="51" width="5.6" height="5.2" fill="#111" stroke="#e0e0e0" stroke-width="0.9"/>
<path d="M199 52.4 L202 55 M199 52.3 V54.6 H201.3 Z" stroke="#e0e0e0" stroke-width="0.6" fill="none"/>
<g fill="none" stroke="#dadada" stroke-width="1.3">
<circle cx="29.4" cy="495.5" r="6.8"/><ellipse cx="29.4" cy="495.5" rx="3.6" ry="6.8" stroke-width="1"/><line x1="22.6" y1="495.5" x2="36.2" y2="495.5"/><line x1="29.4" y1="489" x2="29.4" y2="502" stroke-width="1.1"/><path d="M24 491.3 H34.8" stroke-width="1"/>
</g>
<path d="M51.10 487.50 L54.40 490.30 L53.60 490.30 L53.60 493.00 L56.30 493.00 L56.30 492.20 L59.10 495.50 L56.30 498.80 L56.30 498.00 L53.60 498.00 L53.60 500.70 L54.40 500.70 L51.10 503.50 L47.80 500.70 L48.60 500.70 L48.60 498.00 L45.90 498.00 L45.90 498.80 L43.10 495.50 L45.90 492.20 L45.90 493.00 L48.60 493.00 L48.60 490.30 L47.80 490.30 Z" fill="#dedede" stroke="#b8b8b8" stroke-width="0.6" stroke-linejoin="round"/>
<path d="M51.1 489.5 V501.5 M45.1 495.5 H57.1" stroke="#000" stroke-width="1.5"/>
<path d="M73.1 487.6 L77 490.6 L75.3 490.9 V497.4 L79.2 499.4 L73.1 503.5 L67 499.4 L70.9 497.4 V490.9 L69.2 490.6 Z" fill="#0a0a0a" stroke="#dcdcdc" stroke-width="1.3" stroke-linejoin="round"/>
<line x1="64.3" y1="544.7" x2="64.3" y2="516" stroke="#4f8f4f" stroke-width="1.3"/>
<path d="M64.3 510.7 L67 517 H61.6 Z" fill="#66cc66"/>
<line x1="64.3" y1="544.7" x2="88" y2="549.6" stroke="#b86464" stroke-width="1.4"/>
<path d="M94.8 550.6 L88.5 547.2 L87.8 552.8 Z" fill="#ec7a7a"/>
<line x1="64.3" y1="544.7" x2="49" y2="552" stroke="#336d9c" stroke-width="1.5"/>
<path d="M45.5 554.2 L47.4 550.2 L50.4 549.6 L51.2 552.6 Z" fill="#55bdf2"/>
<rect x="0" y="606" width="750" height="19" fill="#2f2f2f"/>
<rect x="3" y="606" width="727" height="15" fill="#232323"/>
<text x="5.6" y="617.3" font-size="11.8" fill="#c8c8c8" textLength="40.8" lengthAdjust="spacingAndGlyphs">33.33%</text>
<rect x="50" y="607" width="15" height="13" fill="#333"/>
<path d="M53 611 V618 H61 V616" fill="none" stroke="#d0d0d0" stroke-width="1.3"/><path d="M56 616 Q56 611 60 611 V609 L63 612 L60 615 V613 Q58 613 56 616Z" fill="#d0d0d0"/>
<rect x="66" y="607" width="159" height="13.5" fill="#3c6aa3"/>
<rect x="226.7" y="607" width="12" height="13.5" fill="#2d2d2d"/>
<path d="M230 610.7 L236.5 615.2 L230 619.7 Z" fill="#d0d0d0"/>
<rect x="730" y="606" width="15" height="14.5" fill="#323232"/>
<rect x="0" y="620.5" width="747" height="1" fill="#1f1f1f"/>
<path d="M733 618.5 H742 M736 615.5 H742 M738.5 612.5 H742 M740.5 609.5 H742" stroke="#5a5a5a" stroke-width="0.9" stroke-dasharray="1,1"/>
<rect x="731" y="22" width="15" height="584" fill="url(#rstrip)"/>
<rect x="745.5" y="18" width="1.5" height="607" fill="#1e1e1e"/>
<rect x="747" y="18" width="3" height="607" fill="#333"/>
</svg></body></html>
